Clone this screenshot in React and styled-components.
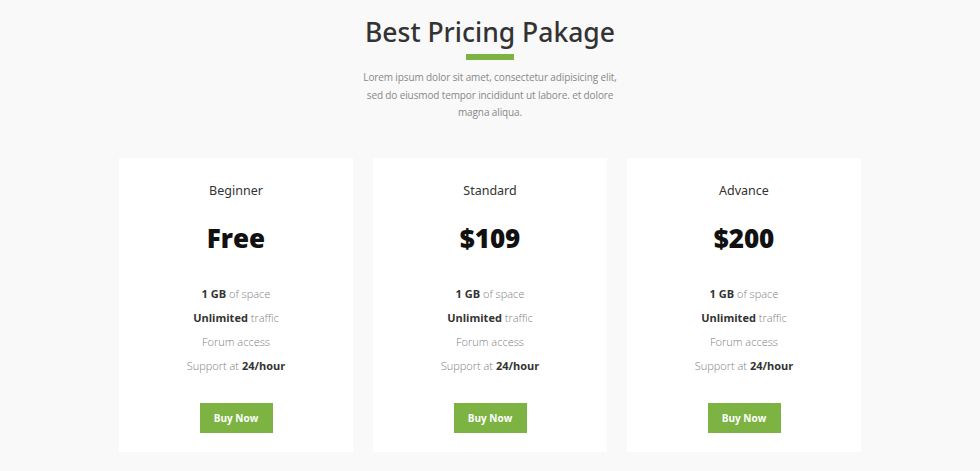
import React from "react";
import styled, {createGlobalStyle} from "styled-components";

const GlobalStyle = createGlobalStyle`
  body {
    margin: 0;
    background: #f9f9f9;
    font-family: "Open Sans", "Liberation Sans", sans-serif;
  }
`

const Section = styled.section`
  display: flex;
  flex-direction: column;
  align-items: center;
  padding: 14px 0 20px;
`

const Title = styled.h2`
  margin: 0;
  font-family: "Noto Sans", "Open Sans", sans-serif;
  font-weight: 500;
  font-size: 26.5px;
  line-height: 36px;
  color: #333;
`

const Bar = styled.div`
  width: 48px;
  height: 6px;
  margin-top: 4px;
  background: #7cb342;
`

const Intro = styled.p`
  margin: 9px 0 0;
  width: 262px;
  text-align: center;
  font-size: 10px;
  letter-spacing: -0.12px;
  line-height: 17.5px;
  color: #888;
`

const Cards = styled.div`
  display: grid;
  grid-template-columns: repeat(3, 234px);
  gap: 20px;
  margin-top: 36px;
`

const Card = styled.div`
  display: flex;
  flex-direction: column;
  align-items: center;
  height: 294px;
  background: #fff;
  padding-top: 24px;
  box-sizing: border-box;
`

const PlanName = styled.h3`
  margin: 0;
  font-family: "Noto Sans", "Open Sans", sans-serif;
  font-weight: 400;
  font-size: 12.5px;
  line-height: 18px;
  color: #333;
`

const Price = styled.div`
  margin-top: 20px;
  font-size: 26px;
  font-weight: 800;
  line-height: 36px;
  color: #111;
`

const Features = styled.ul`
  list-style: none;
  margin: 26px 0 0;
  padding: 0;
  text-align: center;
`

const Feature = styled.li`
  font-size: 11px;
  line-height: 24px;
  font-weight: 300;
  color: #808080;

  b {
    font-weight: 700;
    color: #333;
  }
`

const BuyButton = styled.button`
  margin-top: 25px;
  width: 73px;
  height: 30px;
  border: 0;
  background: #7cb342;
  color: #fff;
  font-family: "Open Sans", sans-serif;
  font-size: 10px;
  font-weight: 700;
  cursor: pointer;
`

const plans = [
    {name: "Beginner", price: "Free"},
    {name: "Standard", price: "$109"},
    {name: "Advance", price: "$200"}
];

export default function App() {
    return (
        <>
            <GlobalStyle/>
            <Section>
                <Title>Best Pricing Pakage</Title>
                <Bar/>
                <Intro>
                    Lorem ipsum dolor sit amet, consectetur adipisicing elit, sed do eiusmod tempor
                    incididunt ut labore. et dolore magna aliqua.
                </Intro>
                <Cards>
                    {plans.map(plan => (
                        <Card key={plan.name}>
                            <PlanName>{plan.name}</PlanName>
                            <Price>{plan.price}</Price>
                            <Features>
                                <Feature><b>1 GB</b> of space</Feature>
                                <Feature><b>Unlimited</b> traffic</Feature>
                                <Feature>Forum access</Feature>
                                <Feature>Support at <b>24/hour</b></Feature>
                            </Features>
                            <BuyButton>Buy Now</BuyButton>
                        </Card>
                    ))}
                </Cards>
            </Section>
        </>
    );
}
